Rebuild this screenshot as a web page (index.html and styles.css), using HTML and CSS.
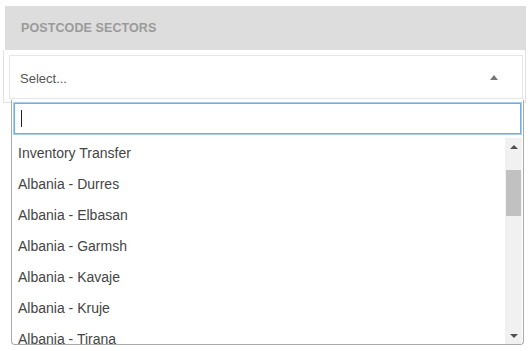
FILE: index.html
```html
<!DOCTYPE html>
<html>
<head>
<meta charset="utf-8">
<link rel="stylesheet" href="styles.css">
</head>
<body>
<div class="page">
  <div class="panel">
    <div class="panel-head">Postcode Sectors</div>
    <div class="panel-body">
      <div class="select">
        <span class="select-text">Select...</span>
        <span class="caret-up"></span>
      </div>
    </div>
    <div class="dropdown">
      <div class="search-wrap">
        <div class="search"><span class="cursor"></span></div>
      </div>
      <div class="results">
        <ul class="options">
          <li>Inventory Transfer</li>
          <li>Albania - Durres</li>
          <li>Albania - Elbasan</li>
          <li>Albania - Garmsh</li>
          <li>Albania - Kavaje</li>
          <li>Albania - Kruje</li>
          <li>Albania - Tirana</li>
        </ul>
        <div class="scrollbar">
          <div class="sb-btn"><span class="tri-up"></span></div>
          <div class="sb-track"><div class="sb-thumb"></div></div>
          <div class="sb-btn"><span class="tri-down"></span></div>
        </div>
      </div>
    </div>
  </div>
</div>
</body>
</html>
```
FILE: styles.css
```css
* { box-sizing: border-box; }
html, body { margin: 0; padding: 0; }
body {
  width: 531px;
  height: 351px;
  overflow: hidden;
  background: #f8f8f8;
  font-family: "Liberation Sans", Arial, sans-serif;
  color: #333;
}
.page {
  padding: 6px 5px 0 5px;
  background: #ffffff;
  height: 100%;
}
.panel {
  position: relative;
  width: 521px;
}
.panel-head {
  height: 44px;
  background: #dddddd;
  padding-left: 16px;
  display: flex;
  align-items: center;
  font-size: 12.5px;
  font-weight: bold;
  text-transform: uppercase;
  color: #9a9a9a;
  letter-spacing: 0.1px;
}
.panel-body {
  background: #fff;
  border: 1px solid #e2e2e2;
  border-top: none;
  padding: 5px 2px 3px 5px;
  margin-left: -2px;
}
.select {
  height: 44px;
  border: 1px solid #e6e6e6;
  display: flex;
  align-items: center;
  justify-content: space-between;
  padding: 0 24px 0 10px;
  font-size: 13px;
  color: #555;
}
.select-text { position: relative; top: 1px; }
.caret-up {
  width: 0; height: 0;
  border-left: 4px solid transparent;
  border-right: 4px solid transparent;
  border-bottom: 5px solid #777;
}
.dropdown {
  position: absolute;
  left: 6px;
  top: 94px;
  width: 513px;
  height: 245px;
  background: #fff;
  border: 1px solid #aaa;
  border-top: none;
  border-radius: 0 0 4px 4px;
  display: flex;
  flex-direction: column;
}
.search-wrap {
  padding: 3px 2px 3px 2px;
}
.search {
  height: 31px;
  border: 1px solid #66afe9;
  box-shadow: 0 0 0 1px #a9d0f0;
  display: flex;
  align-items: center;
  padding-left: 6px;
}
.cursor {
  width: 1px;
  height: 17px;
  background: #222;
}
.results {
  flex: 1;
  display: flex;
  min-height: 0;
  margin-top: 1px;
}
.options {
  list-style: none;
  margin: 0;
  padding: 0;
  flex: 1;
  overflow: hidden;
  font-size: 14px;
  color: #444;
}
.options li {
  height: 31px;
  line-height: 31px;
  padding-left: 6px;
}
.scrollbar {
  width: 17px;
  margin-right: 1px;
  background: #f1f1f1;
  display: flex;
  flex-direction: column;
}
.sb-btn {
  height: 17px;
  display: flex;
  align-items: center;
  justify-content: center;
}
.sb-track {
  flex: 1;
  padding: 15px 1px 0 1px;
}
.sb-thumb {
  height: 46px;
  background: #c1c1c1;
}
.tri-up {
  width: 0; height: 0;
  border-left: 4px solid transparent;
  border-right: 4px solid transparent;
  border-bottom: 4px solid #505050;
}
.tri-down {
  width: 0; height: 0;
  border-left: 4px solid transparent;
  border-right: 4px solid transparent;
  border-top: 4px solid #505050;
}
```
